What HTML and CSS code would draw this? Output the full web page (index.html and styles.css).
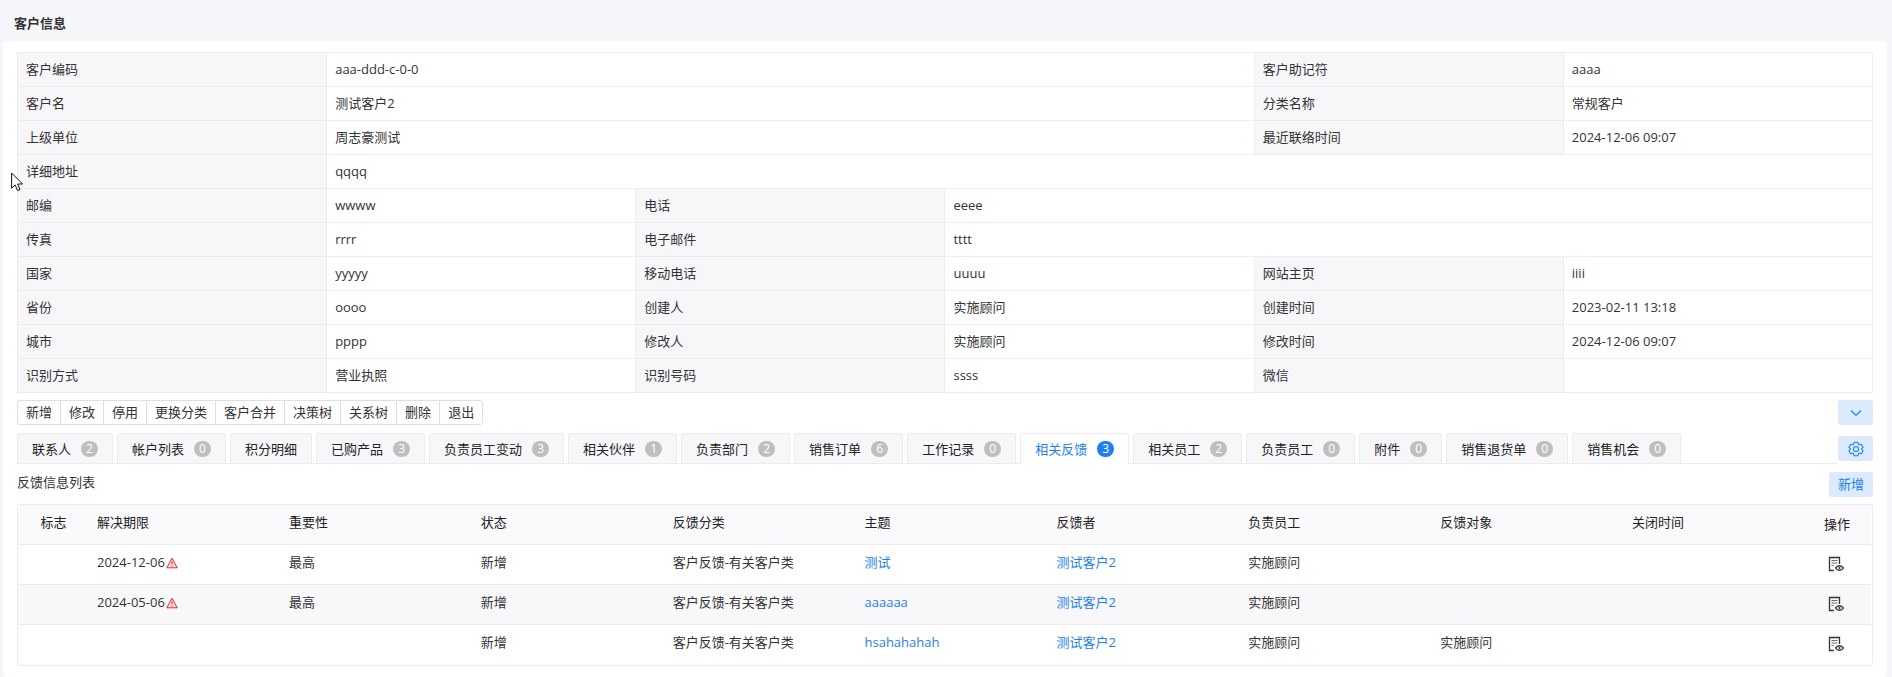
FILE: index.html
```html
<!DOCTYPE html>
<html lang="zh-CN">
<head>
<meta charset="utf-8">
<title>客户信息</title>
<link rel="stylesheet" href="styles.css">
</head>
<body>
<svg class="defs" aria-hidden="true">
  <symbol id="warn" viewBox="0 0 12 12"><path d="M6 1.2 11.2 10.8H.8Z" fill="#fde3e3" stroke="currentColor" stroke-width="1" stroke-linejoin="round"/><path d="M6 4.2V7.6M6 8.4V9.6" stroke="currentColor" stroke-width="1.1"/></symbol>
  <symbol id="view" viewBox="0 0 16 16"><path d="M5.8 14.5H1.5V1.5H11.5V8" fill="none" stroke="currentColor" stroke-width="1.3"/><path d="M3.5 4.5H9.5M3.5 7H9.5M3.5 9.5H5.5" stroke="currentColor" stroke-width="1" opacity=".7"/><path d="M7.6 12C9.3 9 13.7 9 15.4 12 13.7 15 9.3 15 7.6 12Z" fill="none" stroke="currentColor" stroke-width="1.4"/><circle cx="11.5" cy="12" r="1.1" fill="currentColor"/></symbol>
</svg>
<header class="page-head"><h1>客户信息</h1></header>
<main class="card">
  <table class="info">
    <tr><th scope="row">客户编码</th><td colspan="3">aaa-ddd-c-0-0</td><th scope="row">客户助记符</th><td>aaaa</td></tr>
    <tr><th scope="row">客户名</th><td colspan="3">测试客户2</td><th scope="row">分类名称</th><td>常规客户</td></tr>
    <tr><th scope="row">上级单位</th><td colspan="3">周志豪测试</td><th scope="row">最近联络时间</th><td>2024-12-06 09:07</td></tr>
    <tr><th scope="row">详细地址</th><td colspan="5">qqqq</td></tr>
    <tr><th scope="row">邮编</th><td>wwww</td><th scope="row">电话</th><td colspan="3">eeee</td></tr>
    <tr><th scope="row">传真</th><td>rrrr</td><th scope="row">电子邮件</th><td colspan="3">tttt</td></tr>
    <tr><th scope="row">国家</th><td>yyyyy</td><th scope="row">移动电话</th><td>uuuu</td><th scope="row">网站主页</th><td>iiii</td></tr>
    <tr><th scope="row">省份</th><td>oooo</td><th scope="row">创建人</th><td>实施顾问</td><th scope="row">创建时间</th><td>2023-02-11 13:18</td></tr>
    <tr><th scope="row">城市</th><td>pppp</td><th scope="row">修改人</th><td>实施顾问</td><th scope="row">修改时间</th><td>2024-12-06 09:07</td></tr>
    <tr><th scope="row">识别方式</th><td>营业执照</td><th scope="row">识别号码</th><td>ssss</td><th scope="row">微信</th><td></td></tr>
  </table>

  <div class="bar">
    <div class="btn-group">
      <button type="button">新增</button><button type="button">修改</button><button type="button">停用</button><button type="button">更换分类</button><button type="button">客户合并</button><button type="button">决策树</button><button type="button">关系树</button><button type="button">删除</button><button type="button">退出</button>
    </div>
    <button type="button" class="soft icon-btn" aria-label="展开"><svg width="12" height="12" viewBox="0 0 12 12"><path d="M1 3.5 6 8.5 11 3.5" fill="none" stroke="currentColor" stroke-width="1.1"/></svg></button>
  </div>

  <div class="tab-bar">
    <div class="tabs" role="tablist">
      <button type="button" role="tab">联系人<span class="badge">2</span></button>
      <button type="button" role="tab">帐户列表<span class="badge">0</span></button>
      <button type="button" role="tab">积分明细</button>
      <button type="button" role="tab">已购产品<span class="badge">3</span></button>
      <button type="button" role="tab">负责员工变动<span class="badge">3</span></button>
      <button type="button" role="tab">相关伙伴<span class="badge">1</span></button>
      <button type="button" role="tab">负责部门<span class="badge">2</span></button>
      <button type="button" role="tab">销售订单<span class="badge">6</span></button>
      <button type="button" role="tab">工作记录<span class="badge">0</span></button>
      <button type="button" role="tab" class="active" aria-selected="true">相关反馈<span class="badge">3</span></button>
      <button type="button" role="tab">相关员工<span class="badge">2</span></button>
      <button type="button" role="tab">负责员工<span class="badge">0</span></button>
      <button type="button" role="tab">附件<span class="badge">0</span></button>
      <button type="button" role="tab">销售退货单<span class="badge">0</span></button>
      <button type="button" role="tab">销售机会<span class="badge">0</span></button>
    </div>
    <button type="button" class="soft icon-btn" aria-label="设置"><svg width="16" height="16" viewBox="0 0 16 16" fill="none" stroke="currentColor" stroke-width="1.1" stroke-linejoin="round"><path d="M6.2 1.2H9.8L10.3 3.2 11.3 3.8 13.3 3.2 15.1 6.3 13.6 7.7V8.3L15.1 9.7 13.3 12.8 11.3 12.2 10.3 12.8 9.8 14.8H6.2L5.7 12.8 4.7 12.2 2.7 12.8.9 9.7 2.4 8.3V7.7L.9 6.3 2.7 3.2 4.7 3.8 5.7 3.2Z"/><circle cx="8" cy="8" r="2.5"/></svg></button>
  </div>

  <div class="list-head">
    <h2>反馈信息列表</h2>
    <button type="button" class="soft">新增</button>
  </div>

  <div class="grid">
    <table>
      <colgroup><col class="c-flag"><col><col><col><col><col><col><col><col><col><col class="c-op"></colgroup>
      <thead>
        <tr><th class="flag">标志</th><th>解决期限</th><th>重要性</th><th>状态</th><th>反馈分类</th><th>主题</th><th>反馈者</th><th>负责员工</th><th>反馈对象</th><th>关闭时间</th><th class="op">操作</th></tr>
      </thead>
      <tbody>
        <tr><td></td><td>2024-12-06<svg class="warn"><use href="#warn"/></svg></td><td>最高</td><td>新增</td><td>客户反馈-有关客户类</td><td><a href="#">测试</a></td><td><a href="#">测试客户2</a></td><td>实施顾问</td><td></td><td></td><td class="op"><button type="button" aria-label="查看"><svg><use href="#view"/></svg></button></td></tr>
        <tr><td></td><td>2024-05-06<svg class="warn"><use href="#warn"/></svg></td><td>最高</td><td>新增</td><td>客户反馈-有关客户类</td><td><a href="#">aaaaaa</a></td><td><a href="#">测试客户2</a></td><td>实施顾问</td><td></td><td></td><td class="op"><button type="button" aria-label="查看"><svg><use href="#view"/></svg></button></td></tr>
        <tr><td></td><td></td><td></td><td>新增</td><td>客户反馈-有关客户类</td><td><a href="#">hsahahahah</a></td><td><a href="#">测试客户2</a></td><td>实施顾问</td><td>实施顾问</td><td></td><td class="op"><button type="button" aria-label="查看"><svg><use href="#view"/></svg></button></td></tr>
      </tbody>
    </table>
  </div>
</main>
<svg class="pointer" width="13" height="20" viewBox="0 0 13 20" aria-hidden="true"><path d="M.6 1V16.2L4.1 12.9 6.6 18.6 9 17.6 6.6 12H11.6Z" fill="#fff" stroke="#111" stroke-width="1"/></svg>
</body>
</html>
```
FILE: styles.css
```css
* { box-sizing: border-box; }

body {
  margin: 0;
  min-height: 100vh;
  display: flex;
  flex-direction: column;
  background: #f5f6f9;
  color: #333;
  font: 13px/20px "Open Sans", "Noto Sans CJK SC", sans-serif;
}

button {
  margin: 0;
  padding: 0;
  border: 0;
  background: none;
  color: inherit;
  font: inherit;
  white-space: nowrap;
}

a { color: #1f7ff0; text-decoration: none; }
h1, h2 { margin: 0; font-size: 13px; }
.defs { position: absolute; width: 0; height: 0; }

.page-head { padding: 13px 14px 8px; }

.card {
  flex: 1;
  margin: 0 5px 0 3px;
  padding: 11px 14px 8px;
  background: #fff;
  border-radius: 4px;
}

.info {
  width: 100%;
  table-layout: fixed;
  border-collapse: collapse;
  border: 1px solid #e8e9ec;
}
.info th, .info td {
  height: 34px;
  padding: 0 8px 2px;
  border: 1px solid #f0f0f2;
  text-align: left;
  font-weight: 400;
}
.info th { background: #f7f7fa; border-color: #ebebee; }

.bar { display: flex; justify-content: space-between; margin-top: 7px; }
.btn-group { display: flex; }
.btn-group button {
  height: 25px;
  padding: 0 8px 1px;
  border: 1px solid #dcdfe6;
  border-right-width: 0;
}
.btn-group button:first-child { border-radius: 3px 0 0 3px; }
.btn-group button:last-child { border-right-width: 1px; border-radius: 0 3px 3px 0; }

.soft {
  height: 25px;
  padding: 0 9px 1px;
  border-radius: 3px;
  background: #dbeafd;
  color: #1f7ff0;
}
.icon-btn {
  width: 35px;
  padding: 0;
  display: flex;
  align-items: center;
  justify-content: center;
}

.tab-bar { display: flex; align-items: center; margin-top: 8px; }
.tabs {
  flex: 1;
  display: flex;
  gap: 4px;
  border-bottom: 1px solid #ebecf2;
}
.tabs button {
  display: flex;
  align-items: center;
  height: 30px;
  padding: 0 14px;
  border: 1px solid #ebecf2;
  border-bottom: 0;
  border-radius: 3px 3px 0 0;
  background: #f7f7fa;
  color: #222;
}
.tabs .active {
  height: 31px;
  margin-bottom: -1px;
  background: #fff;
  color: #1f7ff0;
}
.badge {
  width: 17px;
  height: 16px;
  margin-left: 10px;
  border-radius: 8px;
  background: #bfbfbf;
  color: #fff;
  font-size: 12px;
  line-height: 16px;
  text-align: center;
}
.active .badge { background: #1f7ff0; }

.list-head {
  display: flex;
  justify-content: space-between;
  margin: 8px 0 7px;
}
.list-head h2 { font-weight: 400; }

.grid {
  padding-right: 1px;
  border: 1px solid #ebecf2;
  border-radius: 3px;
}
.grid table {
  width: 100%;
  table-layout: fixed;
  border-collapse: separate;
  border-spacing: 0;
}
.c-flag { width: 71px; }
.c-op { width: 55px; }
.grid th, .grid td {
  height: 40px;
  padding: 6px 8px 12px;
  border-bottom: 1px solid #ebecf2;
  text-align: left;
  font-weight: 400;
  white-space: nowrap;
}
.grid th { background: #fafafc; color: #222; }
.grid .flag { text-align: center; }
.grid .op { padding-top: 8px; padding-bottom: 10px; }
.grid tbody tr:nth-child(even) { background: #f8f8fa; }
.grid tbody tr:last-child td { border-bottom: 0; }

.warn {
  width: 12px;
  height: 12px;
  margin-left: 1px;
  color: #f5222d;
  vertical-align: -2px;
}
.op button { display: block; margin-left: 4px; }
.op svg { display: block; width: 16px; height: 16px; }

.pointer { position: absolute; left: 11px; top: 172px; }
```
